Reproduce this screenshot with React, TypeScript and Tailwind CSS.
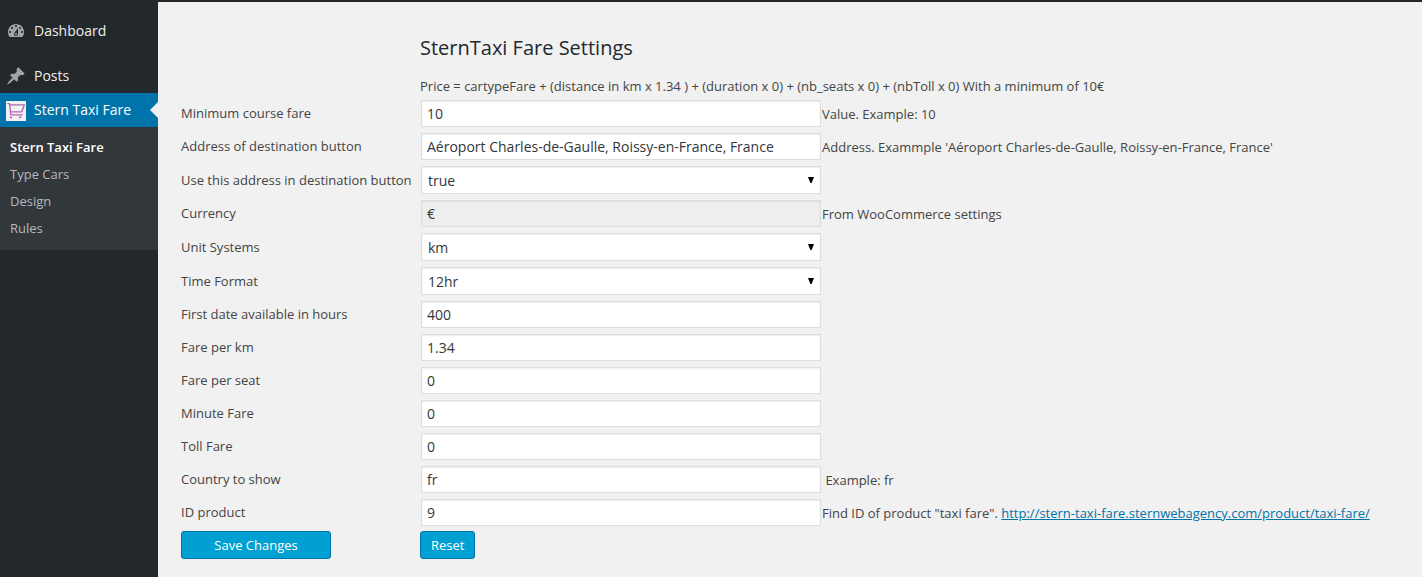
import type { ReactNode } from 'react';

type Field = {
  id: string;
  label: string;
  value: string;
  options?: string[];
  disabled?: boolean;
  hint?: ReactNode;
};

const fields: Field[] = [
  { id: 'minimum-fare', label: 'Minimum course fare', value: '10', hint: 'Value. Example: 10' },
  {
    id: 'destination-address',
    label: 'Address of destination button',
    value: 'Aéroport Charles-de-Gaulle, Roissy-en-France, France',
    hint: "Address. Exammple 'Aéroport Charles-de-Gaulle, Roissy-en-France, France'",
  },
  {
    id: 'use-address',
    label: 'Use this address in destination button',
    value: 'true',
    options: ['true', 'false'],
  },
  { id: 'currency', label: 'Currency', value: '€', disabled: true, hint: 'From WooCommerce settings' },
  { id: 'unit-systems', label: 'Unit Systems', value: 'km', options: ['km', 'miles'] },
  { id: 'time-format', label: 'Time Format', value: '12hr', options: ['12hr', '24hr'] },
  { id: 'first-date', label: 'First date available in hours', value: '400' },
  { id: 'fare-km', label: 'Fare per km', value: '1.34' },
  { id: 'fare-seat', label: 'Fare per seat', value: '0' },
  { id: 'fare-minute', label: 'Minute Fare', value: '0' },
  { id: 'fare-toll', label: 'Toll Fare', value: '0' },
  { id: 'country', label: 'Country to show', value: 'fr', hint: <>&nbsp;Example: fr</> },
  {
    id: 'product-id',
    label: 'ID product',
    value: '9',
    hint: (
      <>
        Find ID of product "taxi fare".{' '}
        <a href="http://stern-taxi-fare.sternwebagency.com/product/taxi-fare/" className="text-[#0073aa] underline">
          http://stern-taxi-fare.sternwebagency.com/product/taxi-fare/
        </a>
      </>
    ),
  },
];

const submenu = ['Stern Taxi Fare', 'Type Cars', 'Design', 'Rules'];

function DashboardIcon() {
  return (
    <svg viewBox="0 0 20 20" className="size-5 fill-[#a0a5aa]" aria-hidden="true">
      <path
        fillRule="evenodd"
        d="M3.76 16h12.48c1.1-1.37 1.76-3.11 1.76-5 0-4.42-3.58-8-8-8s-8 3.58-8 8c0 1.89.66 3.63 1.76 5zM10 4c.55 0 1 .45 1 1s-.45 1-1 1-1-.45-1-1 .45-1 1-1zM6 6c.55 0 1 .45 1 1s-.45 1-1 1-1-.45-1-1 .45-1 1-1zm8 0c.55 0 1 .45 1 1s-.45 1-1 1-1-.45-1-1 .45-1 1-1zm-5.37 5.55L12 7v6c0 1.1-.9 2-2 2s-2-.9-2-2c0-.57.24-1.08.63-1.45zM4 10c.55 0 1 .45 1 1s-.45 1-1 1-1-.45-1-1 .45-1 1-1zm12 0c.55 0 1 .45 1 1s-.45 1-1 1-1-.45-1-1 .45-1 1-1zm-5 3c0-.55-.45-1-1-1s-1 .45-1 1 .45 1 1 1 1-.45 1-1z"
      />
    </svg>
  );
}

function PinIcon() {
  return (
    <svg viewBox="0 0 20 20" className="size-5 fill-[#a0a5aa]" aria-hidden="true">
      <path d="M10.44 3.02l1.82-1.82 6.36 6.35-1.83 1.82c-1.05-.68-2.48-.57-3.41.36l-.75.75c-.92.93-1.04 2.35-.35 3.41l-1.83 1.82-2.41-2.41-2.8 2.79c-.42.42-3.38 2.71-3.8 2.29s1.86-3.39 2.28-3.81l2.79-2.79L4.1 9.36l1.83-1.82c1.05.69 2.48.57 3.4-.36l.75-.75c.93-.92 1.05-2.35.36-3.41z" />
    </svg>
  );
}

function CartIcon() {
  return (
    <svg viewBox="0 0 20 20" className="mt-0.5 size-5" aria-hidden="true">
      <rect width="20" height="20" fill="#f4f0f6" />
      <g fill="none" stroke="#a868ac" strokeWidth="1.3" strokeLinejoin="round" strokeLinecap="round">
        <path d="M1.8 2.6h1.8l1.2 11.2h11.4M4 3.8h14.4l-2.6 7H4.6" />
      </g>
      <circle cx="5" cy="16.3" r="1.1" fill="#a868ac" />
      <circle cx="14.2" cy="16.3" r="1.1" fill="#a868ac" />
    </svg>
  );
}

function MenuItem({ icon, label, active = false }: { icon: ReactNode; label: string; active?: boolean }) {
  return (
    <a
      href="#"
      className={
        active
          ? 'relative flex h-[34px] items-center gap-2 bg-[#0073aa] pl-1.5 text-sm text-white'
          : 'flex h-[34px] items-center gap-2 pl-1.5 text-sm text-[#eee]'
      }
    >
      {icon}
      {label}
      {active && (
        <span className="absolute top-1/2 right-0 -translate-y-1/2 border-8 border-l-0 border-transparent border-r-[#f1f1f1]" />
      )}
    </a>
  );
}

const boxClass =
  'w-full border border-[#ddd] text-sm leading-5 text-[#32373c] shadow-[inset_0_1px_2px_rgba(0,0,0,0.07)] outline-none';

function FieldRow({ field }: { field: Field }) {
  return (
    <div className="grid grid-cols-[240px_400px_1fr] items-center">
      <label htmlFor={field.id} className="pb-px">
        {field.label}
      </label>
      {field.options ? (
        <div className="relative py-[3px]">
          <select
            id={field.id}
            defaultValue={field.value}
            className={`${boxClass} block h-7 appearance-none bg-white px-1.5 pt-px`}
          >
            {field.options.map((option) => (
              <option key={option}>{option}</option>
            ))}
          </select>
          <svg
            viewBox="0 0 6 6"
            className="pointer-events-none absolute top-1/2 right-[7px] size-1.5 -translate-y-1/2 fill-black"
            aria-hidden="true"
          >
            <path d="M0 0h6L3.6 6H2.4z" />
          </svg>
        </div>
      ) : (
        <div className="py-[3px]">
          <input
            id={field.id}
            type="text"
            defaultValue={field.value}
            disabled={field.disabled}
            className={`${boxClass} block h-[27px] bg-white px-[5px] disabled:bg-[#eee]`}
          />
        </div>
      )}
      <span className="pt-px pl-px whitespace-nowrap">{field.hint}</span>
    </div>
  );
}

const buttonClass = 'h-7 rounded-[3px] border border-[#0073aa] bg-[#00a0d2] text-[13px] text-white';

export default function App() {
  return (
    <div className="flex min-h-screen bg-[#f1f1f1] font-['Open_Sans',sans-serif] text-[13px] leading-5 text-[#444]">
      <nav className="w-[158px] shrink-0 bg-[#23282d] pt-3.5">
        <MenuItem icon={<DashboardIcon />} label="Dashboard" />
        <div className="mt-[11px]">
          <MenuItem icon={<PinIcon />} label="Posts" />
          <MenuItem icon={<CartIcon />} label="Stern Taxi Fare" active />
        </div>
        <ul className="bg-[#32373c] pt-[7px] pb-2">
          {submenu.map((item, index) => (
            <li key={item}>
              <a
                href="#"
                className={
                  index === 0
                    ? 'block h-[27px] px-2.5 leading-[27px] font-semibold text-white'
                    : 'block h-[27px] px-2.5 leading-[27px] text-[#b4b9be]'
                }
              >
                {item}
              </a>
            </li>
          ))}
        </ul>
      </nav>
      <main className="min-w-0 grow border-t-2 border-[#23282d] pl-[23px]">
        <form onSubmit={(event) => event.preventDefault()}>
          <div className="pt-8 pl-[239px]">
            <h1 className="text-xl leading-7 text-[#23282d]">SternTaxi Fare Settings</h1>
            <p className="pt-3.5 pb-px">
              Price = cartypeFare + (distance in km x 1.34 ) + (duration x 0) + (nb_seats x 0) + (nbToll x 0) With a
              minimum of 10€
            </p>
          </div>
          {fields.map((field) => (
            <FieldRow key={field.id} field={field} />
          ))}
          <div className="grid grid-cols-[239px_1fr] pt-0.5">
            <button type="submit" className={`${buttonClass} w-[150px]`}>
              Save Changes
            </button>
            <button type="reset" className={`${buttonClass} justify-self-start px-2.5`}>
              Reset
            </button>
          </div>
        </form>
      </main>
    </div>
  );
}
